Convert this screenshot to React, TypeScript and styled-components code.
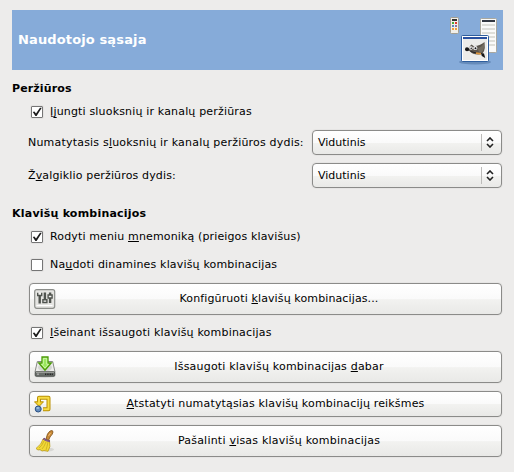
import React from "react";
import styled, { createGlobalStyle } from "styled-components";

const GlobalStyle = createGlobalStyle`
  body { margin: 0; background: #edeceb; }
`;

const Page = styled.main`
  box-sizing: border-box;
  width: 514px;
  height: 472px;
  padding: 10px 11px 0 12px;
  display: flex;
  flex-direction: column;
  overflow: hidden;
  background: #edeceb;
  color: #000;
  font: 11px/16px "DejaVu Sans", sans-serif;
  white-space: nowrap;
`;

const Header = styled.header`
  height: 60px;
  box-sizing: border-box;
  flex: none;
  padding: 0 2px 0 6px;
  display: flex;
  align-items: center;
  justify-content: space-between;
  background: #86abd9;
`;

const PageTitle = styled.h1<{ $track?: number }>`
  margin: 0;
  color: #fff;
  font-size: 13px;
  font-weight: bold;
  letter-spacing: ${(p) => p.$track ?? 0}px;
`;

const Section = styled.section<{ $gap: number }>`
  margin-top: ${(p) => p.$gap}px;
  display: flex;
  flex-direction: column;
`;

const SectionTitle = styled.h2<{ $track?: number }>`
  margin: 0;
  height: 19px;
  line-height: 20px;
  font-size: 11px;
  font-weight: bold;
  letter-spacing: ${(p) => p.$track ?? 0}px;
`;

const Text = styled.span<{ $track?: number }>`
  letter-spacing: ${(p) => p.$track ?? 0}px;
`;

const Mnemonic = styled.u<{ $drop?: number }>`
  text-decoration: underline;
  text-decoration-thickness: 1px;
  text-underline-offset: ${(p) => p.$drop ?? 1}px;
  text-decoration-skip-ink: none;
`;

const CheckRow = styled.label`
  height: 28px;
  padding-left: 19px;
  display: flex;
  align-items: center;
  gap: 7px;
`;

const Box = styled.span`
  box-sizing: border-box;
  width: 12px;
  height: 12px;
  border: 1px solid #757575;
  border-radius: 1px;
  background: #fff;
  box-shadow: 0 0 0 1px #e4e3e2;
  display: flex;
`;

const Field = styled.div`
  height: 25px;
  margin: 4px 1px 4px 16px;
  display: flex;
  align-items: center;
  justify-content: space-between;
`;

const Combo = styled.div`
  box-sizing: border-box;
  width: 190px;
  height: 25px;
  padding: 0 7px 0 5px;
  display: flex;
  align-items: center;
  border: 1px solid #8b8b89;
  border-radius: 4px;
  background: linear-gradient(#fff, #fafafa 50%, #f2f2f0 52%, #e9e9e7);
  box-shadow: 0 0 0 1px #e6e5e4;
`;

const Divider = styled.i`
  width: 1px;
  height: 17px;
  margin: 0 4px 0 auto;
  background: #bcbbb9;
`;

const Button = styled.button<{ $height?: number; $iconColumn?: number }>`
  box-sizing: border-box;
  height: ${(p) => p.$height ?? 32}px;
  margin: 4px 1px 4px 17px;
  padding: 0 4px;
  display: grid;
  grid-template-columns: ${(p) => p.$iconColumn ?? 27}px 1fr;
  align-items: center;
  color: #000;
  font: inherit;
  border: 1px solid #8b8b89;
  border-radius: 4px;
  background: linear-gradient(#fff, #fafafa 50%, #f2f2f0 52%, #e9e9e7);
  box-shadow: 0 0 0 1px #e6e5e4;
`;

const Caption = styled.span<{ $track?: number }>`
  margin-bottom: 1px;
  text-align: center;
  letter-spacing: ${(p) => p.$track ?? 0}px;
`;

const Icon = styled.svg`
  display: block;
`;

function Check({ on, children }: { on?: boolean; children: React.ReactNode }) {
  return (
    <CheckRow>
      <Box>
        {on && (
          <Icon width="10" height="10">
            <path d="M.8 5 2.4 4.4 4 6.4 8 .8 9.8 .8 4.6 9 3.4 9Z" fill="#1c1c1c" />
          </Icon>
        )}
      </Box>
      {children}
    </CheckRow>
  );
}

function Selector() {
  return (
    <Combo>
      <Text>Vidutinis</Text>
      <Divider />
      <Icon width="8" height="11">
        <path d="M1 4 4 1 7 4M1 7 4 10 7 7" fill="none" stroke="#222" strokeWidth="1.6" />
      </Icon>
    </Combo>
  );
}

const WindowsIcon = () => (
  <Icon width="52" height="54" viewBox="449 13 52 54">
    <rect x="450.5" y="17.5" width="8" height="16" rx="1" fill="#f1efe9" stroke="#a39f92" />
    <path d="M452 20h5" stroke="#333" strokeWidth="2" />
    <path d="M452 22h2v2h-2z" fill="#4caa35" />
    <path d="M455 22h2v2h-2z" fill="#e2382e" />
    <path d="M452 25h2v2h-2z" fill="#5a86bb" />
    <path d="M455 25h2v2h-2z" fill="#8871a0" />
    <path d="M452 28h2v2h-2zM455 28h2v2h-2z" fill="#ef9e39" />
    <rect x="480.5" y="18.5" width="16" height="34" rx="1" fill="#fafaf9" stroke="#aaa89f" />
    <path d="M482 21h13" stroke="#333842" strokeWidth="2" />
    <path d="M482 25h13M482 29h13M482 33h13M482 37h13M482 41h13M482 45h13" stroke="#deded9" strokeWidth="2" />
    <ellipse cx="475" cy="62" rx="16" ry="2.5" fill="#597ead" opacity=".7" />
    <rect x="461.5" y="35.5" width="27" height="26" rx="1" fill="#ecece9" stroke="#2e5e9e" />
    <rect x="462.5" y="36.5" width="25" height="24" fill="none" stroke="#fff" />
    <path d="M463 38h24" stroke="#2850a0" strokeWidth="2" />
    <path d="M466.5 48Q469 49.5 470 46L471.5 44.5 473.5 46Q479 46.5 484.5 42L484.8 48Q484 54 479 54.5Q473 55 469.5 51Q466 51 466.5 48Z" fill="#5b554c" />
    <path d="M477 48.5Q482 47 484 43Q485 51 480 53Z" fill="#736d61" />
    <circle cx="471" cy="48" r="1.8" fill="#fff" />
    <circle cx="475.3" cy="48" r="2.1" fill="#fff" />
    <circle cx="471.2" cy="48.2" r=".8" fill="#111" />
    <circle cx="475.5" cy="48.3" r="1" fill="#111" />
    <circle cx="467" cy="49.2" r="2" fill="#161616" />
    <path d="m470.5 51.5 7 1.8" stroke="#222" />
    <path d="m476 53.2 5 .6" stroke="#df963b" strokeWidth="1.8" />
    <path d="m481 53 3 .5 1.2 4.5-3.4-2z" fill="#161616" />
  </Icon>
);

const KeysIcon = () => (
  <Icon width="22" height="20" viewBox="0 0 22 20">
    <rect x=".7" y=".7" width="20" height="18.6" rx="2" fill="#e5e5e2" stroke="#8b8d89" strokeWidth="1.2" />
    <path d="M2.5 16.5h16" stroke="#fff" />
    <g stroke="#50544f">
      <path d="M5.7 6v8.5M10.9 3.5v8M16.1 3.5v10.5" strokeWidth="2.4" />
      <path d="M3.7 3.7v2.8h4V3.7M8.9 13.5v-2.8h4v2.8zM14.1 6h4v3h-4z" fill="#f4f4f2" strokeWidth="1.4" />
    </g>
  </Icon>
);

const SaveIcon = () => (
  <Icon width="22" height="22" viewBox="0 0 22 22">
    <ellipse cx="11" cy="20.5" rx="10.5" ry="1.2" fill="#ccc" />
    <path d="M3.3 5.5h15.4L21 16H1z" fill="#eeeeec" stroke="#898b87" />
    <ellipse cx="11" cy="11.5" rx="7" ry="4" fill="#d4d6d2" />
    <rect x="1.2" y="15.8" width="19.6" height="4.4" rx="1" fill="#6b6f6b" stroke="#4d514d" />
    <path d="M2 16.3h18" stroke="#a8aaa6" />
    <path d="M11 18.3h8" stroke="#222" strokeWidth="1.5" strokeDasharray="1 .7" />
    <circle cx="4" cy="18.3" r="1" fill="#aaa" />
    <path d="M8 1h6v6h3.3L11 14.2 4.7 7H8z" fill="#9be75d" stroke="#4c9b08" strokeWidth="1.3" />
    <path d="M9.3 2.4h3.4v5.8h1.7L11 12 7.6 8.2h1.7z" fill="none" stroke="#d7fab9" strokeWidth=".8" />
  </Icon>
);

const ResetIcon = () => (
  <Icon width="18" height="18" viewBox="0 0 18 18">
    <path d="M5 8.3V2.8h9.5v11.5H9" fill="none" stroke="#b99005" strokeWidth="4" strokeLinejoin="round" />
    <path d="M.5 6.8h9L5 11.5z" fill="#f4d52e" stroke="#b99005" />
    <path d="M5 9V2.8h9.5v11.5H9.3" fill="none" stroke="#f7dc45" strokeWidth="2" strokeLinejoin="round" />
    <circle cx="4.2" cy="14" r="3" fill="#648dbd" stroke="#294f83" />
    <ellipse cx="3.8" cy="12.9" rx="1.5" ry="1" fill="#9bbddd" />
  </Icon>
);

const BroomIcon = () => (
  <Icon width="22" height="22" viewBox="0 0 22 22">
    <ellipse cx="12" cy="19.5" rx="8" ry="2" fill="#cfcfcb" opacity=".7" />
    <path d="M12 9Q13 3 16 1Q19-.5 19 2Q19 4 16 7L14.5 10.5z" fill="#c98a38" stroke="#7e521b" strokeWidth=".8" />
    <path d="m14.5 6 2-3" stroke="#efbd70" />
    <path d="M9 9Q8 14 2 18.5L4 20 6 19.5 8 21 10 20.5 14 21.3Q17 17 15.5 11z" fill="#f2d936" stroke="#bd9d17" strokeWidth=".8" />
    <path d="M10 11Q8 16 5 18M12 12Q10 17 8 19M14 12Q13 17 12 20" fill="none" stroke="#c3a51e" strokeWidth=".7" />
    <path d="M9.4 8.5Q12 11 16 11.3" fill="none" stroke="#6c436f" strokeWidth="2" />
    <path d="M9.6 9Q12 11 15.5 11.3" fill="none" stroke="#aa83ad" strokeWidth=".6" />
  </Icon>
);

export default function App() {
  return (
    <>
      <GlobalStyle />
      <Page>
        <Header>
          <PageTitle $track={0.13}>Naudotojo sąsaja</PageTitle>
          <WindowsIcon />
        </Header>
        <Section $gap={9}>
          <SectionTitle $track={0.13}>Peržiūros</SectionTitle>
          <Check on>
            <Text $track={0.17}>Į<Mnemonic $drop={2}>j</Mnemonic>ungti sluoksnių ir kanalų peržiūras</Text>
          </Check>
          <Field>
            <Text $track={0.2}>Numatytasis s<Mnemonic>l</Mnemonic>uoksnių ir kanalų peržiūros dydis:</Text>
            <Selector />
          </Field>
          <Field>
            <Text $track={0.15}>Ž<Mnemonic>v</Mnemonic>algiklio peržiūros dydis:</Text>
            <Selector />
          </Field>
        </Section>
        <Section $gap={12}>
          <SectionTitle $track={0.22}>Klavišų kombinacijos</SectionTitle>
          <Check on>
            <Text $track={0.14}>Rodyti meniu <Mnemonic>m</Mnemonic>nemoniką (prieigos klavišus)</Text>
          </Check>
          <Check>
            <Text $track={0.17}>Na<Mnemonic>u</Mnemonic>doti dinamines klavišų kombinacijas</Text>
          </Check>
          <Button>
            <KeysIcon />
            <Caption $track={0.12}>Konfigūruoti <Mnemonic>k</Mnemonic>lavišų kombinacijas...</Caption>
          </Button>
          <Check on>
            <Text $track={0.2}><Mnemonic>I</Mnemonic>šeinant išsaugoti klavišų kombinacijas</Text>
          </Check>
          <Button>
            <SaveIcon />
            <Caption $track={0.2}>Išsaugoti klavišų kombinacijas <Mnemonic>d</Mnemonic>abar</Caption>
          </Button>
          <Button $height={26} $iconColumn={20}>
            <ResetIcon />
            <Caption $track={0.17}><Mnemonic>A</Mnemonic>tstatyti numatytąsias klavišų kombinacijų reikšmes</Caption>
          </Button>
          <Button>
            <BroomIcon />
            <Caption $track={0.22}>Pašalinti <Mnemonic>v</Mnemonic>isas klavišų kombinacijas</Caption>
          </Button>
        </Section>
      </Page>
    </>
  );
}
